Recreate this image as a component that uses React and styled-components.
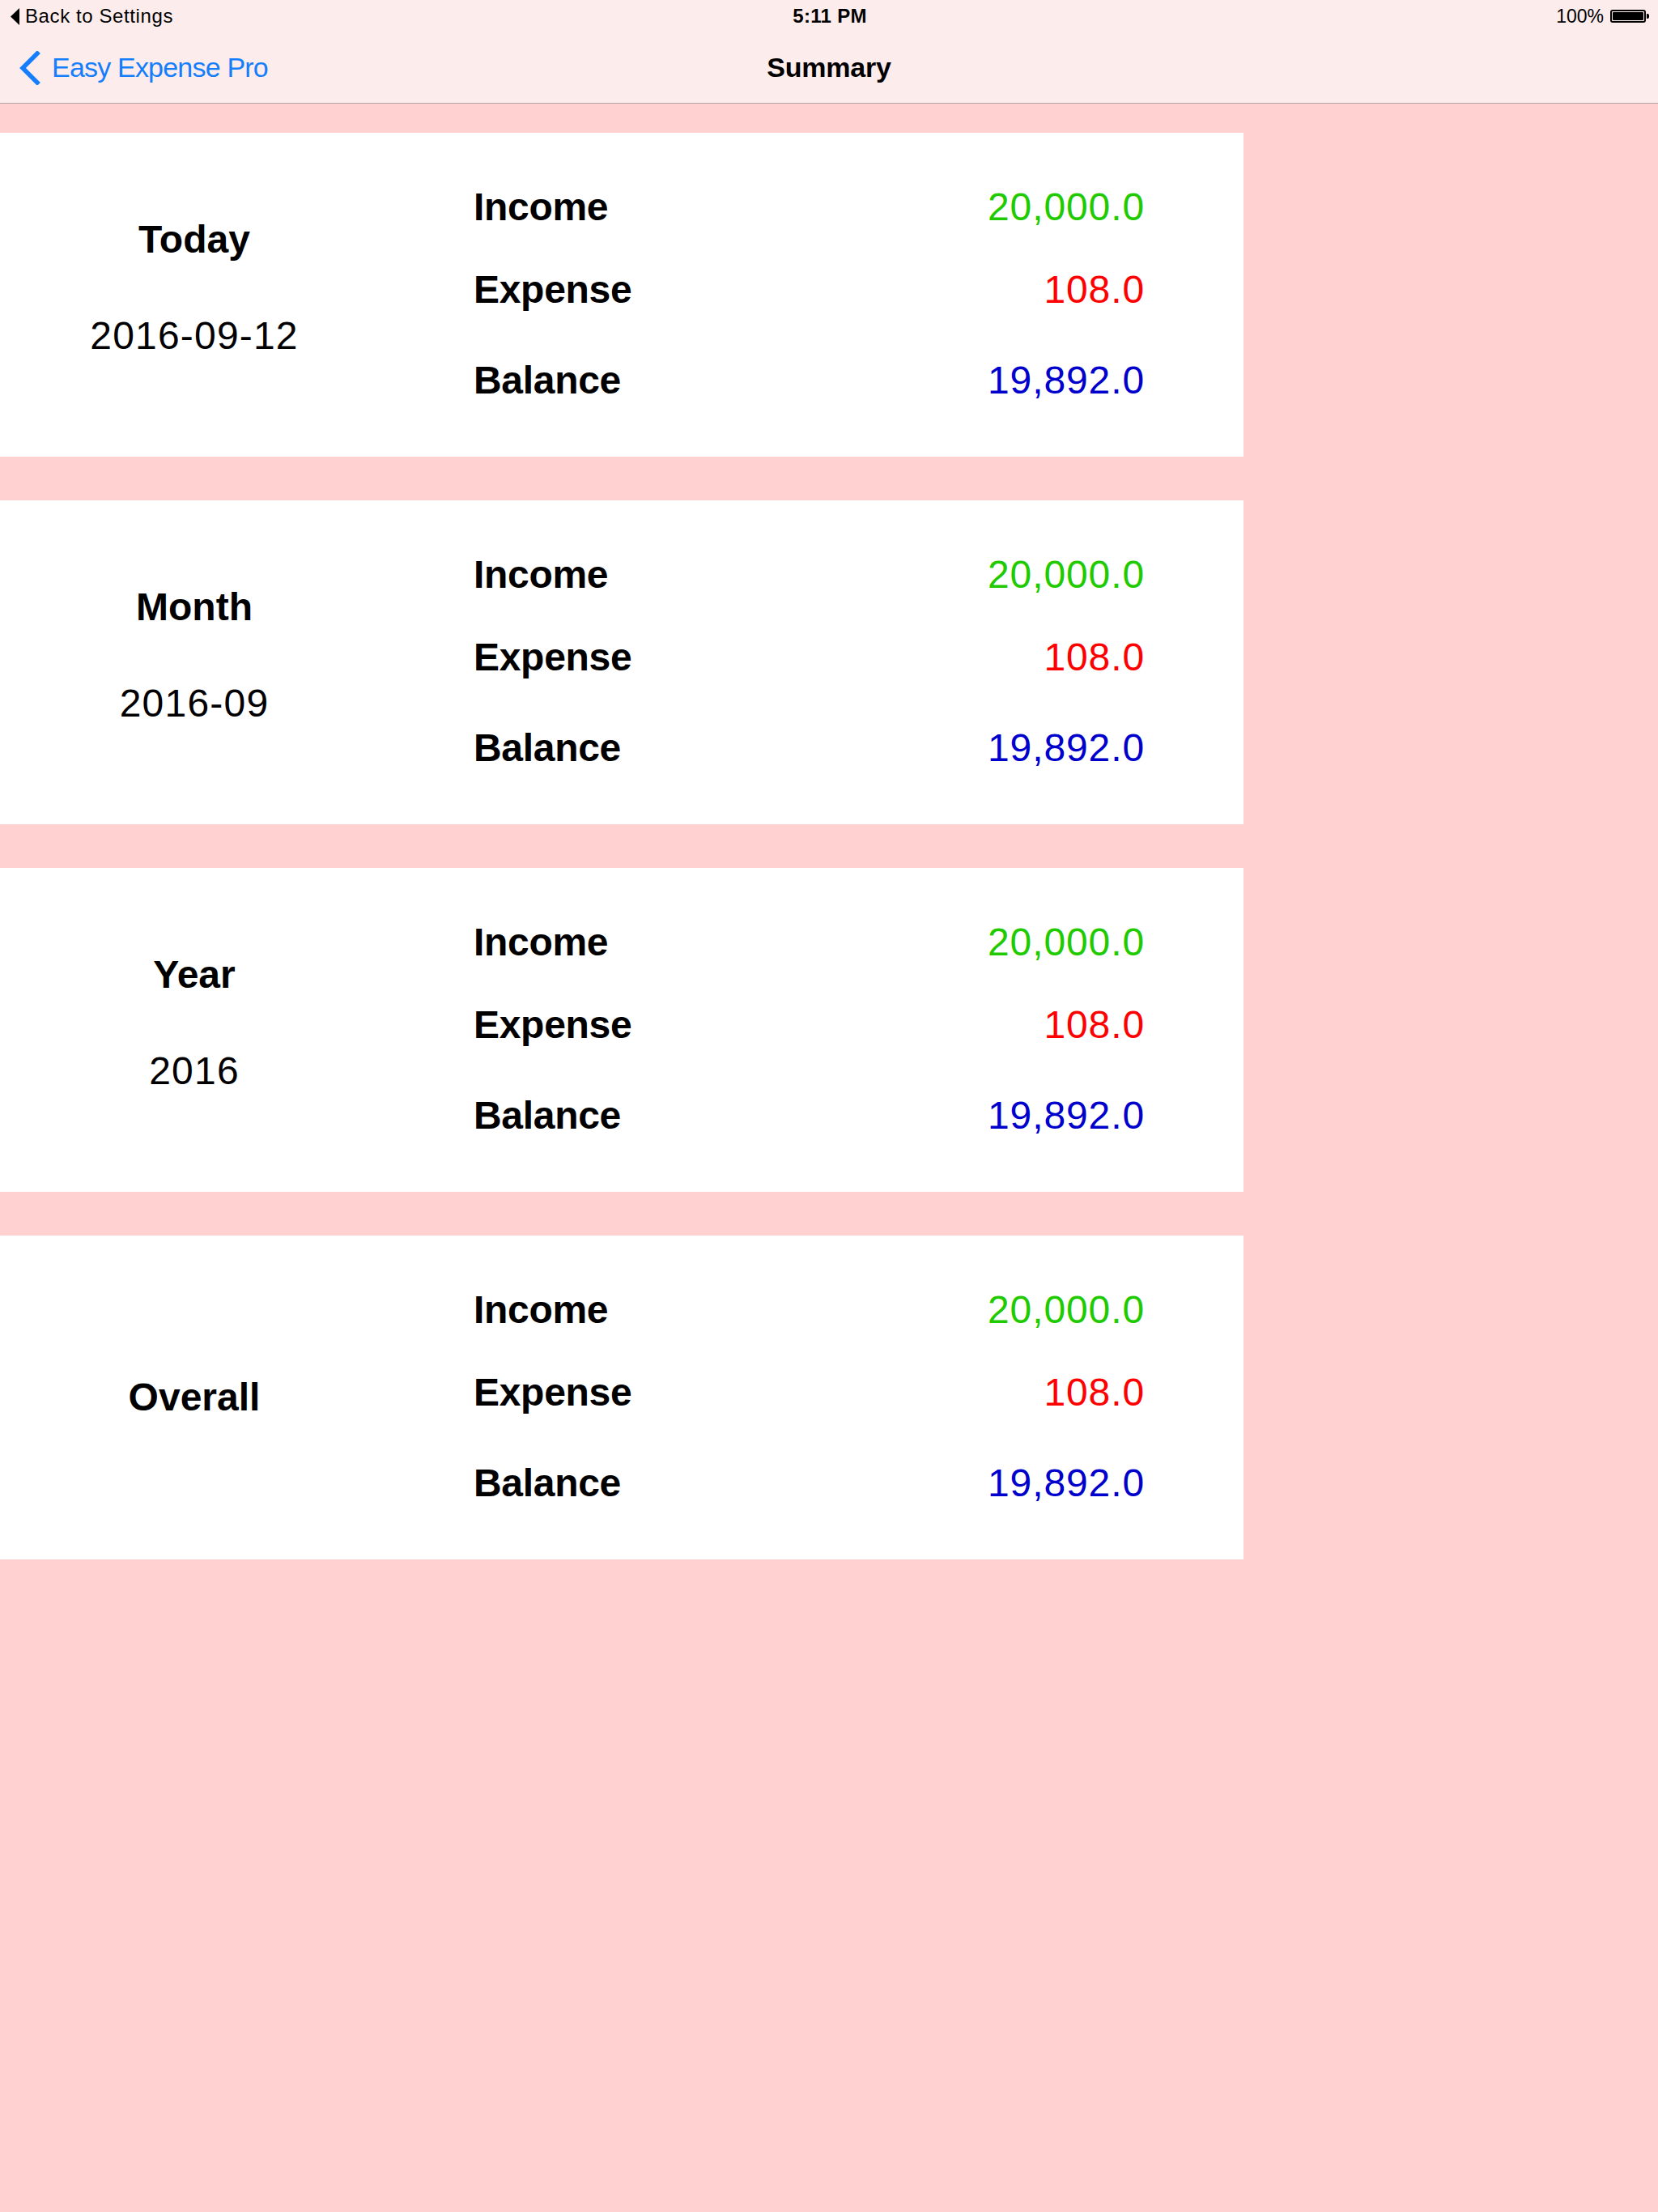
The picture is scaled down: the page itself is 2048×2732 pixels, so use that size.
import React from 'react';
import styled, { createGlobalStyle } from 'styled-components';

const GlobalStyle = createGlobalStyle`
  html, body {
    margin: 0;
    padding: 0;
  }
  body {
    font-family: "Liberation Sans", Arial, sans-serif;
    background: #ffd1d1;
    color: #000;
  }
`;

const Screen = styled.div`
  width: 2048px;
  min-height: 2732px;
  background: #ffd1d1;
  display: flex;
  flex-direction: column;
`;

const Header = styled.header`
  background: #fdecec;
  border-bottom: 1px solid #b9a4a4;
  display: flex;
  flex-direction: column;
`;

const StatusBar = styled.div`
  height: 40px;
  display: grid;
  grid-template-columns: 1fr auto 1fr;
  align-items: center;
  padding: 0 11px 0 13px;
  font-size: 24px;
`;

const StatusLeft = styled.div`
  display: flex;
  align-items: center;
  gap: 7px;
  letter-spacing: 0.6px;
`;

const StatusTime = styled.div`
  font-weight: 700;
  font-size: 24px;
  letter-spacing: 0.3px;
`;

const StatusRight = styled.div`
  display: flex;
  align-items: center;
  justify-content: flex-end;
  gap: 8px;
  font-size: 23px;
`;

const Battery = styled.div`
  position: relative;
  width: 44px;
  height: 16px;
  box-sizing: border-box;
  border: 2px solid #000;
  border-radius: 3px;
  padding: 1px;
  margin-right: 4px;
  &::after {
    content: '';
    position: absolute;
    right: -6px;
    top: 3px;
    width: 3px;
    height: 6px;
    background: #000;
    border-radius: 0 2px 2px 0;
  }
`;

const BatteryFill = styled.div`
  width: 100%;
  height: 100%;
  background: #000;
  border-radius: 1px;
`;

const NavBar = styled.div`
  height: 87px;
  display: grid;
  grid-template-columns: 1fr auto 1fr;
  align-items: center;
  padding: 0 24px;
`;

const BackButton = styled.div`
  display: flex;
  align-items: center;
  gap: 14px;
  color: #147efb;
  font-size: 34px;
  letter-spacing: -0.8px;
`;

const NavTitle = styled.div`
  font-weight: 700;
  font-size: 34px;
  letter-spacing: -0.2px;
`;

const Content = styled.main`
  display: flex;
  flex-direction: column;
  gap: 54px;
  padding-top: 36px;
`;

const Card = styled.section`
  width: 1536px;
  height: 400px;
  background: #ffffff;
  display: flex;
`;

const PeriodColumn = styled.div`
  width: 480px;
  box-sizing: border-box;
  display: flex;
  flex-direction: column;
  align-items: center;
  justify-content: center;
  padding-bottom: ${(p) => (p.$hasDate ? '17px' : '0')};
`;

const PeriodTitle = styled.div`
  font-weight: 700;
  font-size: 48px;
  line-height: 56px;
`;

const PeriodDate = styled.div`
  font-size: 48px;
  line-height: 56px;
  letter-spacing: 1.2px;
  margin-top: 63px;
`;

const Figures = styled.div`
  flex: 1;
  display: flex;
  flex-direction: column;
  padding: 64px 122px 0 105px;
`;

const FigureRow = styled.div`
  display: flex;
  justify-content: space-between;
  align-items: center;
  height: 56px;
  margin-top: ${(p) => p.$gap}px;
`;

const FigureLabel = styled.span`
  font-weight: 700;
  font-size: 48px;
  line-height: 56px;
  letter-spacing: -0.3px;
`;

const FigureValue = styled.span`
  font-size: 48px;
  line-height: 56px;
  letter-spacing: 0.9px;
  color: ${(p) => p.$color};
`;

const rows = [
  { label: 'Income', value: '20,000.0', color: '#1fcb00', gap: 0 },
  { label: 'Expense', value: '108.0', color: '#ff0000', gap: 46 },
  { label: 'Balance', value: '19,892.0', color: '#0000cc', gap: 56 },
];

const periods = [
  { title: 'Today', date: '2016-09-12' },
  { title: 'Month', date: '2016-09' },
  { title: 'Year', date: '2016' },
  { title: 'Overall', date: null },
];

function SummaryCard({ title, date }) {
  return (
    <Card>
      <PeriodColumn $hasDate={!!date}>
        <PeriodTitle>{title}</PeriodTitle>
        {date && <PeriodDate>{date}</PeriodDate>}
      </PeriodColumn>
      <Figures>
        {rows.map((r) => (
          <FigureRow key={r.label} $gap={r.gap}>
            <FigureLabel>{r.label}</FigureLabel>
            <FigureValue $color={r.color}>{r.value}</FigureValue>
          </FigureRow>
        ))}
      </Figures>
    </Card>
  );
}

export default function App() {
  return (
    <>
      <GlobalStyle />
      <Screen>
        <Header>
          <StatusBar>
            <StatusLeft>
              <svg width="11" height="21" viewBox="0 0 11 21">
                <polygon points="11,0 0,10.5 11,21" fill="#000" />
              </svg>
              <span>Back to Settings</span>
            </StatusLeft>
            <StatusTime>5:11 PM</StatusTime>
            <StatusRight>
              <span>100%</span>
              <Battery>
                <BatteryFill />
              </Battery>
            </StatusRight>
          </StatusBar>
          <NavBar>
            <BackButton>
              <svg width="26" height="42" viewBox="0 0 26 42">
                <polyline
                  points="22,3 4,21 22,39"
                  fill="none"
                  stroke="#147efb"
                  strokeWidth="5.5"
                  strokeLinecap="square"
                  strokeLinejoin="miter"
                />
              </svg>
              <span>Easy Expense Pro</span>
            </BackButton>
            <NavTitle>Summary</NavTitle>
            <div />
          </NavBar>
        </Header>
        <Content>
          {periods.map((p) => (
            <SummaryCard key={p.title} title={p.title} date={p.date} />
          ))}
        </Content>
      </Screen>
    </>
  );
}
